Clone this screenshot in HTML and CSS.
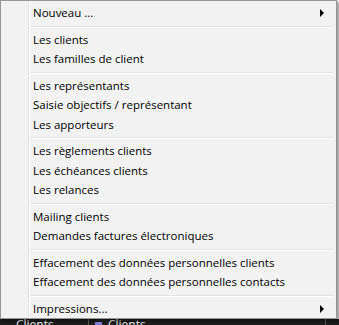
FILE: index.html
```html
<!DOCTYPE html>
<html lang="fr">
<head>
    <meta charset="UTF-8">
    <meta name="viewport" content="width=device-width, initial-scale=1.0">
    <title>Menu clients</title>
    <link rel="stylesheet" href="styles.css">
</head>
<body>
    <div class="desk">
        <div class="menu">
            <div class="item sub">Nouveau ...</div>
            <div class="sep"></div>
            <div class="item">Les clients</div>
            <div class="item">Les familles de client</div>
            <div class="sep"></div>
            <div class="item">Les représentants</div>
            <div class="item">Saisie objectifs / représentant</div>
            <div class="item">Les apporteurs</div>
            <div class="sep"></div>
            <div class="item">Les règlements clients</div>
            <div class="item">Les échéances clients</div>
            <div class="item">Les relances</div>
            <div class="sep"></div>
            <div class="item">Mailing clients</div>
            <div class="item">Demandes factures électroniques</div>
            <div class="sep"></div>
            <div class="item">Effacement des données personnelles clients</div>
            <div class="item">Effacement des données personnelles contacts</div>
            <div class="sep"></div>
            <div class="item sub">Impressions...</div>
        </div>
        <div class="taskbar">
            <span class="task">Clients</span>
            <span class="task active"><i class="task-icon"></i>Clients</span>
        </div>
    </div>
</body>
</html>
```

FILE: styles.css
```css
body {
    margin: 0;
    font-family: "Open Sans", "Noto Sans", sans-serif;
    font-size: 11.5px;
    background: #ececec;
    overflow: hidden;
}

.desk {
    width: 339px;
    height: 325px;
    display: flex;
    flex-direction: column;
}

.menu {
    position: relative;
    z-index: 1;
    width: 335px;
    border: 1px solid #979797;
    padding: 2px 0 0 0;
    background: linear-gradient(to right, #f2f2f2 27px, #e2e3e3 27px, #e2e3e3 28px, #ffffff 28px, #ffffff 29px, #f2f2f2 29px);
    box-shadow: 2px 2px 2px rgba(0, 0, 0, 0.35);
}

.item {
    position: relative;
    height: 19.5px;
    line-height: 19.5px;
    padding-left: 32px;
    color: #000;
    white-space: nowrap;
}

.sub::after {
    content: "";
    position: absolute;
    right: 12px;
    top: 6px;
    border-top: 4px solid transparent;
    border-bottom: 4px solid transparent;
    border-left: 4px solid #000;
}

.sep {
    height: 1px;
    margin: 3px 3px 2px 29px;
    background: #e2e3e3;
    border-bottom: 1px solid #ffffff;
}

.taskbar {
    flex: 1;
    display: flex;
    background: #1c1c1c;
    padding-left: 2px;
}

.task {
    display: flex;
    align-items: flex-start;
    width: 72px;
    padding: 0 0 0 14px;
    color: #e8e8e8;
    font-size: 12px;
    line-height: 12px;
    border-right: 1px solid #555;
}

.task.active {
    width: 230px;
    padding-left: 6px;
}

.task-icon {
    width: 7px;
    height: 7px;
    margin: 3px 6px 0 0;
    background: #7b7bd8;
}
```
